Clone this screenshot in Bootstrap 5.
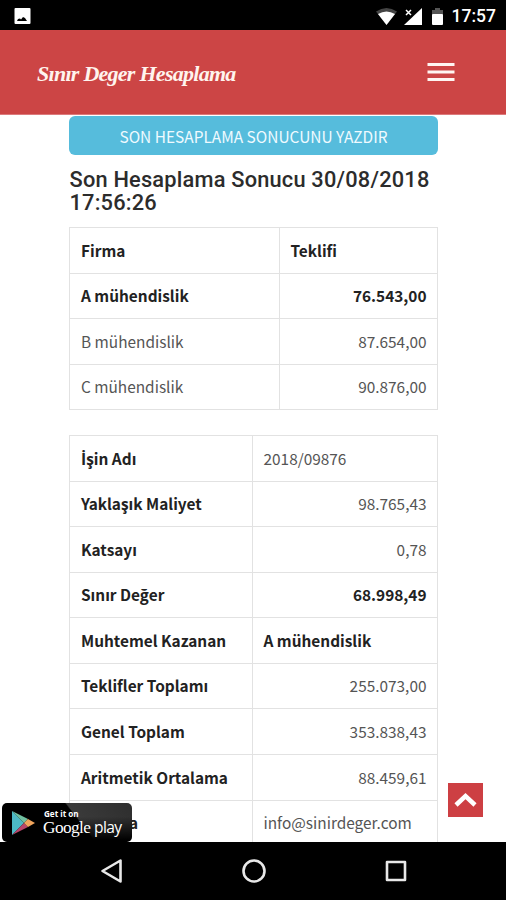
<!DOCTYPE html>
<html lang="tr">
<head>
<meta charset="utf-8">
<meta name="viewport" content="width=device-width, initial-scale=1">
<title>Sınır Deger Hesaplama</title>
<link href="https://cdn.jsdelivr.net/npm/bootstrap@5.3.0/dist/css/bootstrap.min.css" rel="stylesheet">
<style>
  body { font-family: "Noto Sans CJK JP", "Open Sans", sans-serif; font-size: 15.4px; color: #4a4a4a; }
  .screen { width: 506px; height: 900px; }
  .status-bar { height: 30px; padding: 1px 10px 0 14px; font: 500 17.5px/30px Roboto, sans-serif; }
  .clock { margin-left: 6px; }
  .site-nav { height: 85px; background: #cc4545; padding: 0 51px 1px 37px; border-bottom: 1px solid #dc7a7c; }
  .brand { font: italic 700 22px/30px "Liberation Serif", serif; color: #fff4ee; white-space: nowrap; margin-top: 5px; letter-spacing: -.73px; }
  .main-pane { padding: 1px 68px 0 69px; }
  .btn-print { height: 39px; padding: 0; background: #56bcdc; color: #effaff; border: 0; border-radius: 6px; font-size: 15.45px; line-height: 38px; }
  .result-title { font: 500 21.8px/23px Roboto, sans-serif; color: #2c2c2c; margin: 13px 0 13px .5px; letter-spacing: .2px; white-space: nowrap; }
  .result-table { table-layout: fixed; border-color: #e2e2e2; margin: 0 0 25px; width: 369px; color: #555; }
  .result-table > :not(caption) > * > * { height: 45.55px; padding: 0 10.5px 1.5px 11px; line-height: 22px; vertical-align: middle; white-space: nowrap; color: inherit; background: none; }
  .result-table th, .result-table .strong-cell { font-weight: 700; color: #222 !important; }
  .dotted-i { font-family: "Open Sans", sans-serif; font-size: 15.6px; line-height: 1; }
  .col-a { width: 209.5px; }
  .col-b { width: 182.5px; }
  .to-top { right: 23px; bottom: 25px; width: 35px; height: 34px; background: #cd3f43; }
  .play-badge { left: 2px; bottom: 0; width: 130px; height: 39px; border-radius: 5px; background: linear-gradient(180deg, rgba(0,0,0,0) 35%, #000 95%), linear-gradient(52deg, #000 58%, #3a3a3a 59%, #2e2e2e); color: #fff; padding-left: 9px; }
  .play-small { font: 700 8.1px/9px "Open Sans", sans-serif; margin-left: 0; }
  .play-large { font: 17.3px/18px "Liberation Serif", serif; letter-spacing: -.6px; white-space: nowrap; margin-left: -1px; }
  .play-large span { font: 15.6px/18px "Open Sans", sans-serif; letter-spacing: -.6px; }
  .system-nav { height: 58px; }
</style>
<script src="https://cdn.jsdelivr.net/npm/bootstrap@5.3.0/dist/js/bootstrap.bundle.min.js"></script>
</head>
<body class="bg-white">
<div class="screen d-flex flex-column overflow-hidden">
  <div class="status-bar bg-black text-white d-flex align-items-center flex-shrink-0">
    <svg width="17" height="16" viewBox="0 0 17 16"><rect x=".5" width="16" height="16" rx="1" fill="#fff"/><path d="M3 13l1-2 2-.5 1 1 2-2.500 2 1 2 3z" fill="#000"/></svg>
    <svg class="ms-auto" width="70" height="20" viewBox="0 0 70 20">
      <path d="M0 5.500Q10.500-1.500 21 5.500L10.500 19z" fill="#444"/><path d="M2 8Q10.500 3 19 8L10.500 19z" fill="#fff"/>
      <path d="M46 2v17H28z" fill="#fff"/><path d="M28 2h9l1 5-5 4-5-2z" fill="#000"/><path d="M30 4l5 5M35 4l-5 5" stroke="#fff" stroke-width="1.500"/>
      <path d="M56 4h3V2h5v2h3v5H56z" fill="#555"/><rect x="56" y="8" width="11" height="11" rx="1" fill="#fff"/>
    </svg>
    <span class="clock">17:57</span>
  </div>
  <nav class="site-nav d-flex align-items-center justify-content-between flex-shrink-0">
    <span class="brand">Sınır Deger Hesaplama</span>
    <svg width="28" height="20" viewBox="0 0 28 20"><path d="M.5 2.500h27M.5 10h27M.5 17.500h27" stroke="#fff5f2" stroke-width="2.800"/></svg>
  </nav>
  <div class="position-relative flex-grow-1 overflow-hidden">
    <main class="main-pane">
      <button type="button" class="btn btn-info btn-print w-100 d-block">SON HESAPLAMA SONUCUNU YAZDIR</button>
      <h4 class="result-title">Son Hesaplama Sonucu 30/08/2018<br>17:56:26</h4>
      <table class="table table-bordered result-table">
        <colgroup><col class="col-a"><col></colgroup>
        <tbody>
          <tr><th>Firma</th><th>Teklifi</th></tr>
          <tr><th>A mühendislik</th><td class="strong-cell text-end">76.543,00</td></tr>
          <tr><td>B mühendislik</td><td class="text-end">87.654,00</td></tr>
          <tr><td>C mühendislik</td><td class="text-end">90.876,00</td></tr>
        </tbody>
      </table>
      <table class="table table-bordered result-table">
        <colgroup><col class="col-b"><col></colgroup>
        <tbody>
          <tr><th><span class="dotted-i">İ</span>şin Adı</th><td>2018/09876</td></tr>
          <tr><th>Yaklaşık Maliyet</th><td class="text-end">98.765,43</td></tr>
          <tr><th>Katsayı</th><td class="text-end">0,78</td></tr>
          <tr><th>Sınır Değer</th><td class="strong-cell text-end">68.998,49</td></tr>
          <tr><th>Muhtemel Kazanan</th><td class="strong-cell">A mühendislik</td></tr>
          <tr><th>Teklifler Toplamı</th><td class="text-end">255.073,00</td></tr>
          <tr><th>Genel Toplam</th><td class="text-end">353.838,43</td></tr>
          <tr><th>Aritmetik Ortalama</th><td class="text-end">88.459,61</td></tr>
          <tr><th>E-Posta</th><td>info@sinirdeger.com</td></tr>
        </tbody>
      </table>
    </main>
    <a href="#" class="to-top position-absolute d-flex align-items-center justify-content-center" aria-label="Yukarı">
      <svg width="25" height="18" viewBox="0 0 25 18"><path d="M3 14l9.500-9 9.500 9" fill="none" stroke="#fff" stroke-width="4.500"/></svg>
    </a>
    <a href="#" class="play-badge position-absolute d-flex align-items-center text-decoration-none">
      <svg width="25" height="28" viewBox="0 0 25 28"><path d="M1 2v24l12-12z" fill="#4cb9c5"/><path d="M1 2l16 8-4 4z" fill="#70c0a0"/><path d="M1 26l16-8-4-4z" fill="#b8456a"/><path d="M17 10l7 4-7 4-4-4z" fill="#f0a45c"/></svg>
      <div class="ms-2 ps-0"><div class="play-small">Get it on</div><div class="play-large">Google <span>play</span></div></div>
    </a>
  </div>
  <div class="system-nav bg-black flex-shrink-0 d-flex">
    <svg width="506" height="58" viewBox="0 0 506 58" fill="none" stroke="#e8e8e8" stroke-width="2.600" stroke-linejoin="round"><path d="M120.500 18.500v21L102.500 29z"/><circle cx="254" cy="29" r="10.500"/><rect x="387" y="20" width="18" height="18"/></svg>
  </div>
</div>
</body>
</html>
